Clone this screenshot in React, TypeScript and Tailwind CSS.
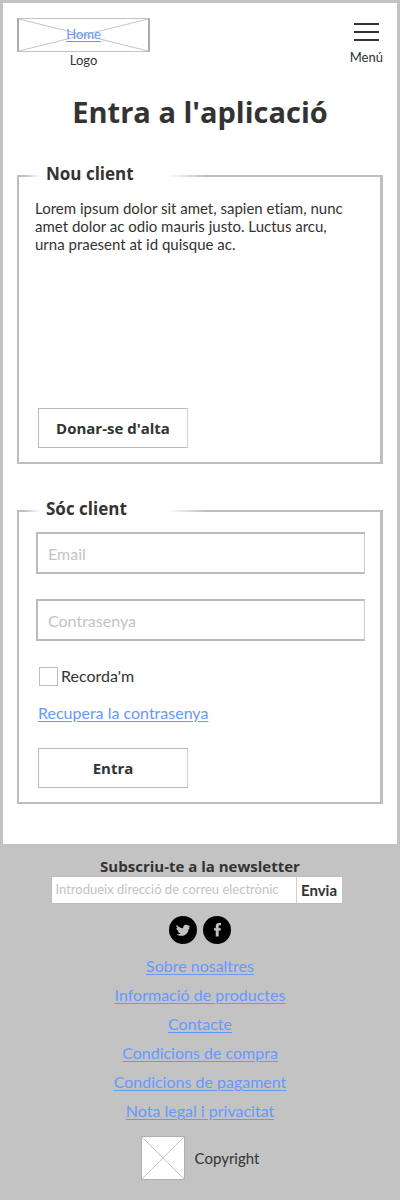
import type { ReactNode } from "react";

const links = [
  "Sobre nosaltres",
  "Informació de productes",
  "Contacte",
  "Condicions de compra",
  "Condicions de pagament",
  "Nota legal i privacitat",
];

function Cross() {
  return (
    <svg
      className="absolute inset-0 size-full text-[#c3c5c6]"
      viewBox="0 0 100 100"
      preserveAspectRatio="none"
      stroke="currentColor"
      aria-hidden="true"
    >
      <path d="M0 0 100 100M100 0 0 100" vectorEffect="non-scaling-stroke" />
    </svg>
  );
}

function Panel({ title, children }: { title: string; children: ReactNode }) {
  return (
    <fieldset className="min-w-0 border-2 border-r-3 border-[#bcbfc1] pr-4 pb-3.5 pl-4">
      <legend className="relative ml-[5px] h-6 w-[127px] pl-1.5 font-['Comic_Sans_MS','Open_Sans',sans-serif] text-[17px] leading-5 font-bold">
        {title}
        <span className="absolute top-2.5 right-full h-1 w-4 bg-linear-to-l from-white to-transparent" />
        <span className="absolute top-2.5 left-full h-1 w-10 bg-linear-to-r from-white to-transparent" />
      </legend>
      {children}
    </fieldset>
  );
}

function SketchButton({ children }: { children: ReactNode }) {
  return (
    <button
      type="button"
      className="ml-[3px] h-10 w-[150px] self-start border border-[#b9bcbe] border-r-[#d0d2d3] font-['Comic_Sans_MS','Open_Sans',sans-serif] text-[15px] font-bold"
    >
      {children}
    </button>
  );
}

function Field({ label, type }: { label: string; type: string }) {
  return (
    <input
      type={type}
      aria-label={label}
      placeholder={label}
      className="ml-px h-[42px] border-2 border-r border-[#b9bcbe] border-r-[#cdcfd0] px-2.5 text-base placeholder:text-[#c3c3c3] placeholder:opacity-100"
    />
  );
}

export default function App() {
  return (
    <div className="min-h-screen bg-[#c3c3c3] px-[3px] pt-[3px] font-['Comic_Sans_MS','Lato',sans-serif] text-base text-[#333333] [font-variant-ligatures:none]">
      <div className="bg-white px-3.5 pt-[15px] pb-10">
        <header className="flex items-start justify-between text-[13px]">
          <div className="flex flex-col items-center">
            <a
              href="#home"
              className="relative flex h-[34px] w-[133px] items-center justify-center border border-x-2 border-[#c0c2c3] border-x-[#a9adb0] text-[#6699ff] underline underline-offset-2"
            >
              <Cross />
              <span className="relative">Home</span>
            </a>
            <span className="leading-4">Logo</span>
          </div>
          <button type="button" className="flex flex-col items-center pt-[5px]">
            <span className="flex flex-col gap-1.5">
              <span className="h-0.5 w-[25px] bg-[#333333]" />
              <span className="h-0.5 w-[25px] bg-[#333333]" />
              <span className="h-0.5 w-[25px] bg-[#333333]" />
            </span>
            <span className="mt-2 leading-4">Menú</span>
          </button>
        </header>

        <main className="flex flex-col">
          <h1 className="mt-6 mb-8 text-center font-['Comic_Sans_MS','Open_Sans',sans-serif] text-[29px] leading-10 font-bold">
            Entra a l'aplicació
          </h1>

          <Panel title="Nou client">
            <div className="mt-[11px] flex min-h-[249px] flex-col justify-between">
              <p className="pr-2 text-[15px] leading-[18px]">
                Lorem ipsum dolor sit amet, sapien etiam, nunc amet dolor ac odio mauris justo. Luctus arcu, urna
                praesent at id quisque ac.
              </p>
              <SketchButton>Donar-se d'alta</SketchButton>
            </div>
          </Panel>

          <form className="mt-[35px]">
            <Panel title="Sóc client">
              <div className="-mr-px mt-[9px] flex flex-col gap-[25px]">
                <Field label="Email" type="email" />
                <Field label="Contrasenya" type="password" />
                <div className="flex flex-col items-start">
                  <label className="flex items-center gap-[3px] pl-1 leading-5">
                    <input type="checkbox" className="size-[19px] appearance-none border border-[#bcbfc1]" />
                    Recorda'm
                  </label>
                  <a
                    href="#recupera"
                    className="mt-[17px] ml-[3px] leading-5 text-[#6699ff] underline underline-offset-2"
                  >
                    Recupera la contrasenya
                  </a>
                </div>
                <SketchButton>Entra</SketchButton>
              </div>
            </Panel>
          </form>
        </main>
      </div>

      <footer className="flex flex-col items-center pt-3 pb-5">
        <h2 className="font-['Comic_Sans_MS','Open_Sans',sans-serif] text-[15px] leading-5 font-bold">
          Subscriu-te a la newsletter
        </h2>
        <form className="mr-2 flex h-7 w-[291px] border border-r-0 border-[#babcbd]">
          <input
            type="email"
            aria-label="Correu electrònic"
            placeholder="Introdueix direcció de correu electrònic"
            className="min-w-0 flex-1 bg-white px-1 text-[13px] placeholder:text-[#c3c3c3] placeholder:opacity-100"
          />
          <button
            type="button"
            className="w-[46px] border-l border-[#d0d0d0] bg-white text-[15px] font-bold"
          >
            Envia
          </button>
        </form>
        <div className="mt-3 flex gap-1.5">
          <a href="#twitter" aria-label="Twitter" className="flex size-7 items-center justify-center rounded-full bg-black">
            <svg viewBox="0 0 24 24" className="size-3.5 fill-[#c3c3c3]" aria-hidden="true">
              <path d="M1 3c3 4 7 6 11 6 0-4 3-7 6-6 1 0 2 .6 2.6 1.3L24 5l-2 3 2 .5-2.5 2C21 17 16 22 9 22c-3 0-6-1-8-2.500 3 0 5-.5 7-2-3-.5-4-1.500-5-3.500h2C2 12.500 1 11 .5 8.500L3 9C.5 7 .3 5 1 3Z" />
            </svg>
          </a>
          <a href="#facebook" aria-label="Facebook" className="flex size-7 items-center justify-center rounded-full bg-black">
            <svg viewBox="0 0 12 24" className="h-3.5 w-[7px] fill-[#c3c3c3]" aria-hidden="true">
              <path d="M3 23V13H0V9h3V6c0-4 2-6 5.500-6H12v4H9.500C8.300 4 8 4.600 8 5.700V9h4l-.5 4H8v10H3Z" />
            </svg>
          </a>
        </div>
        <nav className="mt-3 flex flex-col items-center gap-[9px]">
          {links.map((link) => (
            <a key={link} href="#info" className="leading-5 text-[#6699ff] underline underline-offset-2">
              {link}
            </a>
          ))}
        </nav>
        <div className="mt-[15px] flex items-center gap-2.5">
          <div className="relative size-11 border border-[#aeb1b3] bg-white">
            <Cross />
          </div>
          <span className="text-[15px]">Copyright</span>
        </div>
      </footer>
    </div>
  );
}
